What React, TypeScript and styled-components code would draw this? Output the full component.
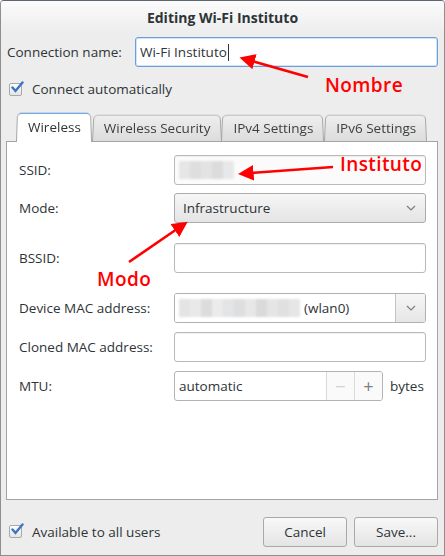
import styled, { createGlobalStyle } from 'styled-components';

const GlobalStyle = createGlobalStyle`
  html, body {
    margin: 0;
    padding: 0;
    background: #ffffff;
  }
  * {
    box-sizing: border-box;
  }
`;

const FONT = `'Open Sans', 'Noto Sans', sans-serif`;

const Chevron = () => (
  <svg width="10" height="6" viewBox="0 0 10 6">
    <path d="M1 1 L5 5 L9 1" fill="none" stroke="#7a7e80" strokeWidth="1.2" />
  </svg>
);

const CheckMark = () => (
  <CheckBox>
    <svg width="14" height="13" viewBox="0 0 14 13">
      <path d="M2.5 6.5 L5.5 10 L12.5 1.5" fill="none" stroke="#3e74c4" strokeWidth="2.4" strokeLinecap="round" />
    </svg>
  </CheckBox>
);

const Blur = ({ cells }: { cells: string[] }) => (
  <BlurRow>
    {cells.map((c, i) => (
      <BlurCell key={i} style={{ background: c }} />
    ))}
  </BlurRow>
);

const App = () => {
  return (
    <>
      <GlobalStyle />
      <Window>
        <TitleBar>Editing Wi-Fi Instituto</TitleBar>
        <Body>
          <NameRow>
            <Label>Connection name:</Label>
            <FocusEntry>
              Wi-Fi Instituto<Caret />
            </FocusEntry>
          </NameRow>
          <CheckRow>
            <CheckMark />
            <span>Connect automatically</span>
          </CheckRow>

          <Notebook>
            <TabRow>
              <Tab $active>Wireless</Tab>
              <Tab>Wireless Security</Tab>
              <Tab>IPv4 Settings</Tab>
              <Tab>IPv6 Settings</Tab>
            </TabRow>
            <Panel>
              <FormRow>
                <FieldLabel>SSID:</FieldLabel>
                <Entry $tint>
                  <Blur cells={['#e6e6e6', '#dedede', '#e3e3e3', '#dcdcdc', '#e8e8ea']} />
                </Entry>
              </FormRow>
              <FormRow $gap={8}>
                <FieldLabel>Mode:</FieldLabel>
                <Combo>
                  <span>Infrastructure</span>
                  <Chevron />
                </Combo>
              </FormRow>
              <FormRow $gap={20}>
                <FieldLabel>BSSID:</FieldLabel>
                <Entry />
              </FormRow>
              <FormRow $gap={20}>
                <FieldLabel>Device MAC address:</FieldLabel>
                <EntryCombo>
                  <EntryComboText>
                    <Blur
                      cells={[
                        '#e4e4e4', '#e9e9e9', '#dcdcdc', '#ebebeb', '#e2e4e6', '#dedede',
                        '#e7e7e7', '#dadada', '#e5e5e5', '#e0e0e0', '#e6e6e6',
                      ]}
                    />
                    <span>(wlan0)</span>
                  </EntryComboText>
                  <EntryComboButton>
                    <Chevron />
                  </EntryComboButton>
                </EntryCombo>
              </FormRow>
              <FormRow $gap={9}>
                <FieldLabel>Cloned MAC address:</FieldLabel>
                <Entry />
              </FormRow>
              <FormRow $gap={9}>
                <FieldLabel>MTU:</FieldLabel>
                <SpinWrap>
                  <Spin>
                    <SpinText>automatic</SpinText>
                    <SpinButton $disabled>−</SpinButton>
                    <SpinButton>+</SpinButton>
                  </Spin>
                  <span>bytes</span>
                </SpinWrap>
              </FormRow>
            </Panel>
          </Notebook>

          <Footer>
            <CheckRow $flat>
              <CheckMark />
              <span>Available to all users</span>
            </CheckRow>
            <Buttons>
              <Button>Cancel</Button>
              <Button>Save...</Button>
            </Buttons>
          </Footer>
        </Body>

        <Annotations width="445" height="556" viewBox="0 0 445 556">
          <defs>
            <marker id="head" markerWidth="6" markerHeight="6" refX="1" refY="3" orient="auto">
              <path d="M0 0 L6 3 L0 6 Z" fill="#ff0000" />
            </marker>
          </defs>
          <line x1="308" y1="77" x2="252" y2="61" stroke="#ff0000" strokeWidth="2.6" markerEnd="url(#head)" />
          <line x1="333" y1="167" x2="251" y2="173" stroke="#ff0000" strokeWidth="2.6" markerEnd="url(#head)" />
          <line x1="129" y1="262" x2="177" y2="229" stroke="#ff0000" strokeWidth="2.6" markerEnd="url(#head)" />
        </Annotations>
        <Note $x={325} $y={72}>Nombre</Note>
        <Note $x={340} $y={151}>Instituto</Note>
        <Note $x={97} $y={266}>Modo</Note>
      </Window>
    </>
  );
};

export default App;

const Window = styled.div`
  position: relative;
  width: 445px;
  height: 556px;
  display: flex;
  flex-direction: column;
  background: #ededed;
  border: 1px solid #8f8f8f;
  border-top-color: #5d6670;
  border-radius: 4px 4px 0 0;
  font-family: ${FONT};
  font-size: 13.5px;
  color: #2e3436;
  overflow: hidden;
`;

const TitleBar = styled.div`
  height: 32px;
  flex: none;
  display: flex;
  align-items: center;
  justify-content: center;
  font-weight: 700;
  font-size: 14px;
  background: linear-gradient(#fbfbfb, #ededed);
`;

const Body = styled.div`
  flex: 1;
  display: flex;
  flex-direction: column;
  padding: 4px 6px 0 5px;
`;

const NameRow = styled.div`
  display: flex;
  align-items: center;
  height: 30px;
  padding-left: 1px;
`;

const Label = styled.span`
  width: 128px;
  flex: none;
`;

const FocusEntry = styled.div`
  flex: 1;
  height: 30px;
  display: flex;
  align-items: center;
  padding-left: 4px;
  background: #ffffff;
  border: 1px solid #6c9fdc;
  border-radius: 3px;
  box-shadow: inset 0 0 0 1px #d3e3f6;
`;

const Caret = styled.span`
  display: inline-block;
  width: 1px;
  height: 17px;
  background: #2e3436;
  margin-left: 1px;
`;

const CheckRow = styled.div<{ $flat?: boolean }>`
  display: flex;
  align-items: center;
  gap: 10px;
  margin-top: ${({ $flat }) => ($flat ? '0' : '13px')};
  padding-left: 3px;
  height: 18px;
`;

const CheckBox = styled.span`
  position: relative;
  width: 13px;
  height: 13px;
  flex: none;
  border: 1px solid #a7a9aa;
  border-radius: 2px;
  background: linear-gradient(#ffffff, #e4e4e4);

  svg {
    position: absolute;
    left: 0px;
    top: -3px;
  }
`;

const Notebook = styled.div`
  margin-top: 14px;
  display: flex;
  flex-direction: column;
`;

const TabRow = styled.div`
  display: flex;
  align-items: flex-end;
  padding-left: 10px;
  height: 29px;
  position: relative;
  z-index: 1;
`;

const Tab = styled.div<{ $active?: boolean }>`
  position: relative;
  height: ${({ $active }) => ($active ? '30px' : '27px')};
  padding: 0 11px 0 12px;
  display: flex;
  align-items: center;
  justify-content: center;
  margin-bottom: ${({ $active }) => ($active ? '-1px' : '0')};
  color: ${({ $active }) => ($active ? '#2e3436' : '#3b3f41')};

  &::before {
    content: '';
    position: absolute;
    inset: 0;
    z-index: -1;
    border: 1px solid #a6a6a6;
    border-bottom: none;
    border-top: ${({ $active }) => ($active ? '1px solid #4a90d9' : '1px solid #b3b3b3')};
    border-radius: 5px 5px 0 0;
    background: ${({ $active }) => ($active ? '#ffffff' : 'linear-gradient(#eeeeee, #dcdcdc)')};
    transform: perspective(60px) rotateX(3deg);
    transform-origin: bottom;
  }
`;

const Panel = styled.div`
  height: 359px;
  background: #ffffff;
  border: 1px solid #a4a4a4;
  padding: 13px 11px 0 12px;
  display: flex;
  flex-direction: column;
`;

const FormRow = styled.div<{ $gap?: number }>`
  display: flex;
  align-items: center;
  height: 30px;
  margin-top: ${({ $gap }) => $gap ?? 0}px;
`;

const FieldLabel = styled.span`
  width: 155px;
  flex: none;
`;

const Entry = styled.div<{ $tint?: boolean }>`
  flex: 1;
  height: 30px;
  display: flex;
  align-items: center;
  padding-left: 4px;
  background: ${({ $tint }) => ($tint ? '#fbfbfb' : '#ffffff')};
  border: 1px solid #b9b9b6;
  border-radius: 3px;
  box-shadow: inset 0 1px 1px rgba(0, 0, 0, 0.06);
`;

const BlurRow = styled.div`
  display: flex;
  height: 18px;
  filter: blur(1px);
`;

const BlurCell = styled.span`
  width: 11px;
  height: 18px;
`;

const Combo = styled.div`
  flex: 1;
  height: 30px;
  display: flex;
  align-items: center;
  justify-content: space-between;
  padding: 0 9px 0 8px;
  border: 1px solid #acacab;
  border-radius: 3px;
  background: linear-gradient(#f6f6f6, #e4e4e4);
  box-shadow: 0 1px 0 rgba(255, 255, 255, 0.7);
`;

const EntryCombo = styled.div`
  flex: 1;
  height: 30px;
  display: flex;
  border: 1px solid #b0b0ae;
  border-radius: 3px;
  overflow: hidden;
`;

const EntryComboText = styled.div`
  flex: 1;
  display: flex;
  align-items: center;
  gap: 4px;
  padding-left: 4px;
  background: #ffffff;
  border-right: 1px solid #c4c4c4;
`;

const EntryComboButton = styled.div`
  width: 29px;
  display: flex;
  align-items: center;
  justify-content: center;
  background: linear-gradient(#f6f6f6, #e6e6e6);
`;

const SpinWrap = styled.div`
  flex: 1;
  display: flex;
  align-items: center;
  gap: 7px;
`;

const Spin = styled.div`
  width: 209px;
  height: 30px;
  display: flex;
  border: 1px solid #b3b3b1;
  border-radius: 3px;
  overflow: hidden;
  background: #ffffff;
`;

const SpinText = styled.div`
  flex: 1;
  display: flex;
  align-items: center;
  padding-left: 4px;
`;

const SpinButton = styled.div<{ $disabled?: boolean }>`
  width: 28px;
  display: flex;
  align-items: center;
  justify-content: center;
  border-left: 1px solid #dadada;
  background: #fafafa;
  font-size: 18px;
  color: ${({ $disabled }) => ($disabled ? '#d0d0d0' : '#7b7f80')};
`;

const Footer = styled.div`
  flex: 1;
  display: flex;
  align-items: center;
  justify-content: space-between;
  padding: 8px 0 0 0;
`;

const Buttons = styled.div`
  display: flex;
  gap: 7px;
`;

const Button = styled.div`
  width: 84px;
  height: 30px;
  display: flex;
  align-items: center;
  justify-content: center;
  border: 1px solid #a9a9a7;
  border-radius: 3px;
  background: linear-gradient(#f8f8f8, #e4e4e4);
`;

const Annotations = styled.svg`
  position: absolute;
  left: -1px;
  top: -1px;
  pointer-events: none;
`;

const Note = styled.span<{ $x: number; $y: number }>`
  position: absolute;
  left: ${({ $x }) => $x - 1}px;
  top: ${({ $y }) => $y - 1}px;
  color: #ff0000;
  font-family: 'Open Sans', sans-serif;
  font-size: 19px;
  font-weight: 600;
  letter-spacing: 0.4px;
`;
